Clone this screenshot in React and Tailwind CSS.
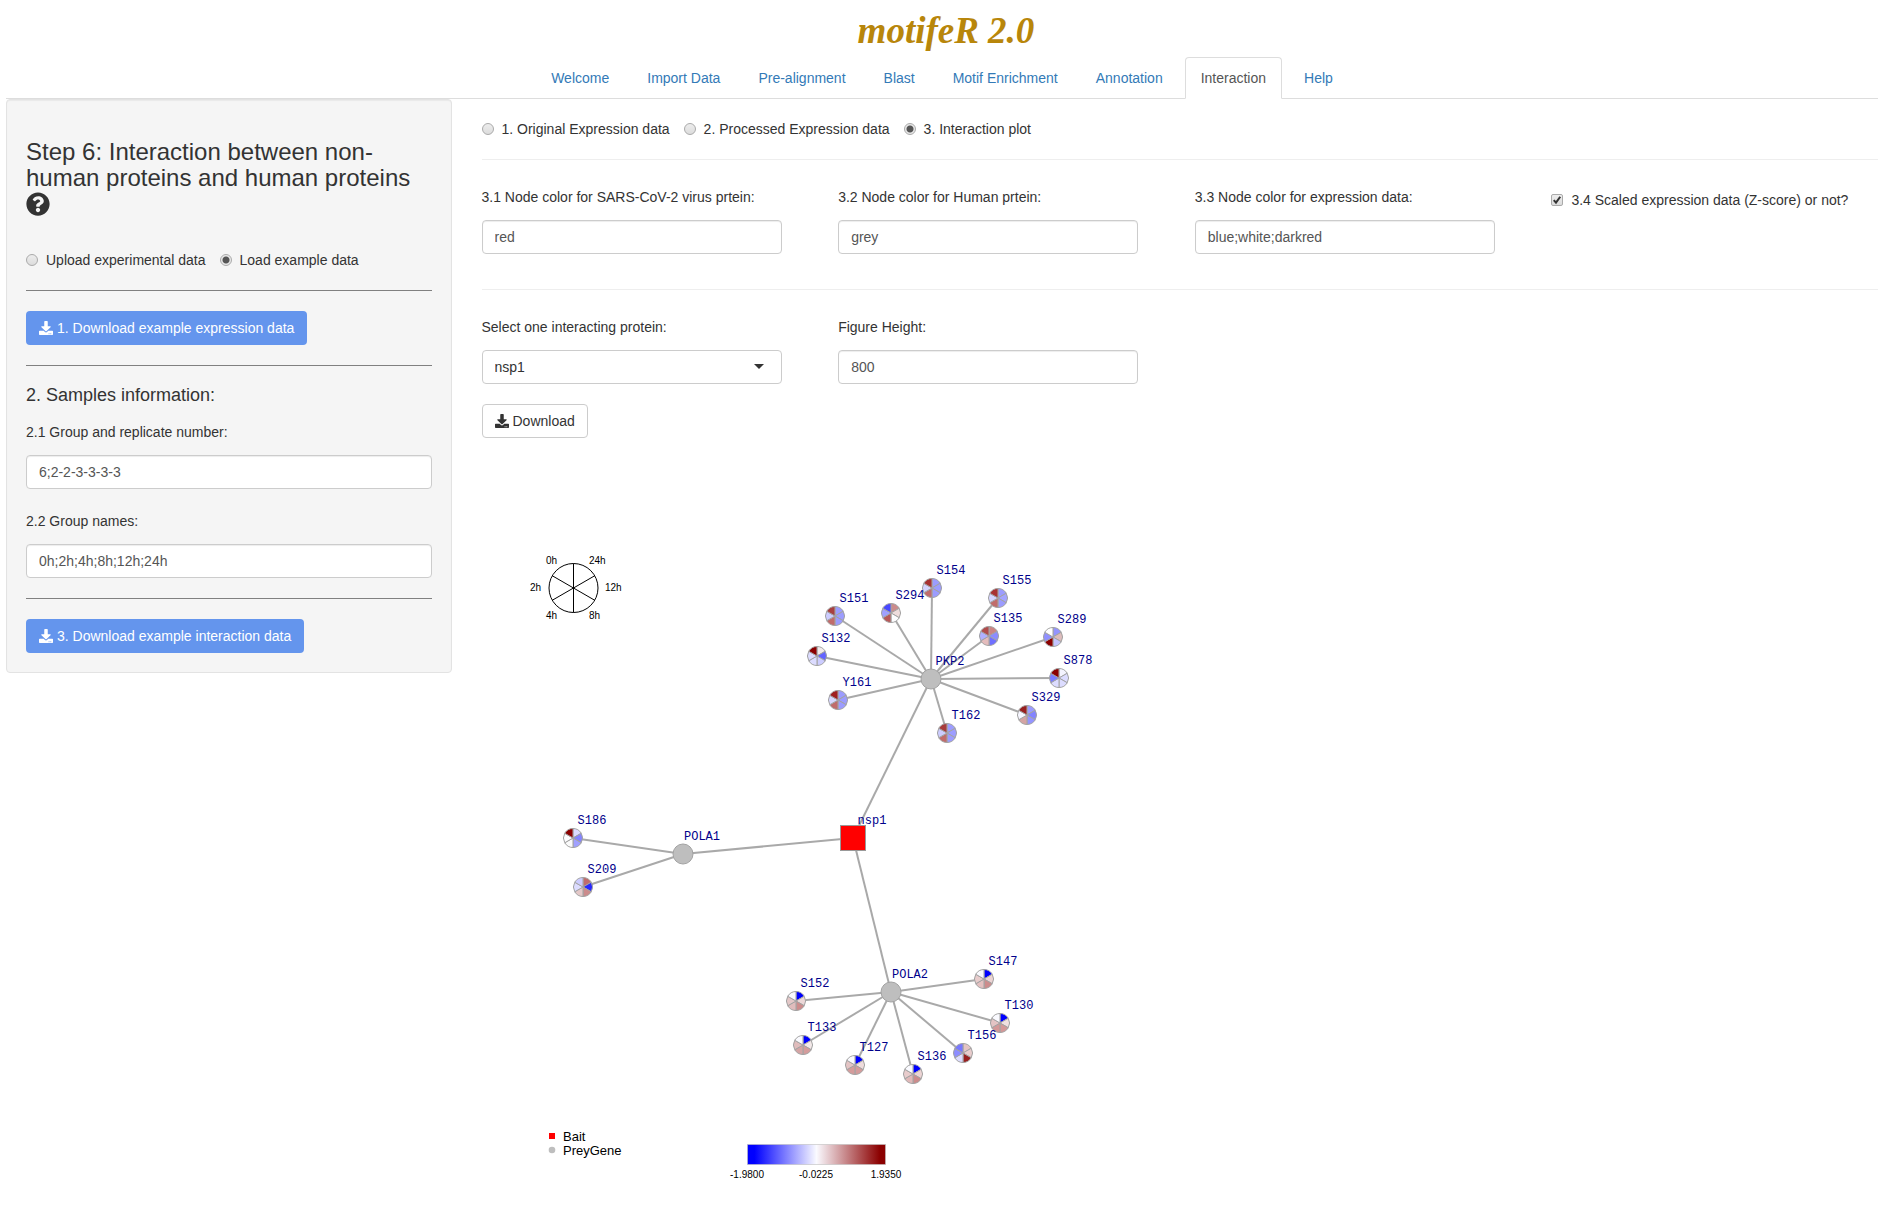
import React, { useState } from "react";
import { FaDownload, FaQuestionCircle } from "react-icons/fa";

const TABS = [
  "Welcome",
  "Import Data",
  "Pre-alignment",
  "Blast",
  "Motif Enrichment",
  "Annotation",
  "Interaction",
  "Help",
];

/* Slice colours run clockwise from the top: 24h, 12h, 8h, 4h, 2h, 0h */
const SITES = [
  { id: "S154", x: 932, y: 588, hub: "PKP2", c: ["#9c9cff", "#9c9cff", "#9c9cff", "#c06c6c", "#d4d4ff", "#a83232"] },
  { id: "S294", x: 891, y: 613, hub: "PKP2", c: ["#cc8c8c", "#eedcdc", "#fdfdff", "#b85858", "#a0a0ff", "#4848ff"] },
  { id: "S151", x: 835, y: 616, hub: "PKP2", c: ["#9c9cff", "#9c9cff", "#9c9cff", "#c06c6c", "#ccccff", "#a84040"] },
  { id: "S132", x: 817, y: 656, hub: "PKP2", c: ["#f2eaea", "#6464ff", "#ccccff", "#dcdcff", "#dcdcff", "#8b0000"] },
  { id: "Y161", x: 838, y: 700, hub: "PKP2", c: ["#9c9cff", "#9c9cff", "#9c9cff", "#c06c6c", "#d8d8ff", "#a02020"] },
  { id: "T162", x: 947, y: 733, hub: "PKP2", c: ["#9c9cff", "#9c9cff", "#9c9cff", "#c06c6c", "#ccccff", "#a83c3c"] },
  { id: "S329", x: 1027, y: 715, hub: "PKP2", c: ["#9c9cff", "#8484ff", "#9494ff", "#d4a4a4", "#f6f6ff", "#982020"] },
  { id: "S878", x: 1059, y: 678, hub: "PKP2", c: ["#f4f4ff", "#dcdcff", "#dcdcff", "#dcdcff", "#7c7cff", "#8b0000"] },
  { id: "S289", x: 1053, y: 637, hub: "PKP2", c: ["#9494ff", "#ddbcbc", "#c4c4ff", "#8b0000", "#9090ff", "#ffffff"] },
  { id: "S135", x: 989, y: 636, hub: "PKP2", c: ["#cc8484", "#8c8cff", "#7070ff", "#e4bcbc", "#b0b0ff", "#b04c4c"] },
  { id: "S155", x: 998, y: 598, hub: "PKP2", c: ["#9c9cff", "#a4a4ff", "#9c9cff", "#c06c6c", "#d4d4ff", "#a83232"] },
  { id: "S186", x: 573, y: 838, hub: "POLA1", c: ["#dcdcff", "#8484ff", "#a0a0ff", "#fafafa", "#fdfdff", "#8b0000"] },
  { id: "S209", x: 583, y: 887, hub: "POLA1", c: ["#c06c6c", "#2828ff", "#cc8c8c", "#e4c8c8", "#dcdcff", "#ccccff"] },
  { id: "S152", x: 796, y: 1001, hub: "POLA2", c: ["#0000ff", "#ecd8d8", "#cc8c8c", "#e0bcbc", "#e4c8c8", "#fafaff"] },
  { id: "T133", x: 803, y: 1045, hub: "POLA2", c: ["#0000ff", "#f2e8e8", "#d49c9c", "#d4a4a4", "#e0bcbc", "#fafaff"] },
  { id: "T127", x: 855, y: 1065, hub: "POLA2", c: ["#0000ff", "#eedcdc", "#d49c9c", "#d49c9c", "#e4c4c4", "#fafaff"] },
  { id: "S136", x: 913, y: 1074, hub: "POLA2", c: ["#0000ff", "#ecd4d4", "#cc8c8c", "#e0b8b8", "#e8cccc", "#fafaff"] },
  { id: "T156", x: 963, y: 1053, hub: "POLA2", c: ["#e4c4c4", "#e8cccc", "#982020", "#dcdcff", "#8c8cff", "#7878ff"] },
  { id: "T130", x: 1000, y: 1023, hub: "POLA2", c: ["#0000ff", "#f0e0e0", "#d49898", "#d49898", "#e4c4c4", "#fafaff"] },
  { id: "S147", x: 984, y: 979, hub: "POLA2", c: ["#0000ff", "#ecd4d4", "#cc8c8c", "#e4c0c0", "#e8cccc", "#fafaff"] },
];

const HUBS = {
  PKP2: { x: 931, y: 679 },
  POLA1: { x: 683, y: 854 },
  POLA2: { x: 891, y: 992 },
};

const BAIT = { x: 853, y: 838 };

const TIME_LABELS = [
  { t: "0h", x: 546, y: 564 },
  { t: "24h", x: 589, y: 564 },
  { t: "2h", x: 530, y: 591 },
  { t: "12h", x: 605, y: 591 },
  { t: "4h", x: 546, y: 619 },
  { t: "8h", x: 589, y: 619 },
];

function point(cx, cy, r, deg) {
  const a = (deg * Math.PI) / 180;
  return [cx + r * Math.sin(a), cy - r * Math.cos(a)];
}

function Pie({ x, y, c }) {
  return (
    <g stroke="#a3a3a3" strokeWidth="1">
      {c.map((fill, i) => {
        const [x1, y1] = point(x, y, 9.5, i * 60);
        const [x2, y2] = point(x, y, 9.5, i * 60 + 60);
        return <path key={i} fill={fill} d={`M${x} ${y}L${x1} ${y1}A9.5 9.5 0 0 1 ${x2} ${y2}Z`} />;
      })}
    </g>
  );
}

function NodeLabel({ x, y, children }) {
  return (
    <text x={x + 19} y={y - 14} textAnchor="middle" fill="#00008b" className="font-['Liberation_Mono',monospace] text-[12px]">
      {children}
    </text>
  );
}

function Network() {
  return (
    <svg viewBox="482 438 1200 776" className="block w-[1200px] max-w-full" role="img" aria-label="Interaction network of nsp1">
      <defs>
        <linearGradient id="scale">
          <stop offset="0" stopColor="#0000ff" />
          <stop offset="0.05" stopColor="#0000ff" />
          <stop offset="0.5" stopColor="#fafaff" />
          <stop offset="0.96" stopColor="#8b0000" />
          <stop offset="1" stopColor="#8b0000" />
        </linearGradient>
      </defs>

      <g stroke="#000" strokeWidth="1" fill="none">
        <circle cx="573.5" cy="588" r="24.5" />
        {[0, 60, 120].map((d) => {
          const [x1, y1] = point(573.5, 588, 24.5, d);
          const [x2, y2] = point(573.5, 588, 24.5, d + 180);
          return <line key={d} x1={x1} y1={y1} x2={x2} y2={y2} />;
        })}
      </g>
      <g fill="#000" className="text-[10px]">
        {TIME_LABELS.map((l) => (
          <text key={l.t} x={l.x} y={l.y}>{l.t}</text>
        ))}
      </g>

      <g stroke="#a9a9a9" strokeWidth="2">
        {SITES.map((s) => (
          <line key={s.id} x1={s.x} y1={s.y} x2={HUBS[s.hub].x} y2={HUBS[s.hub].y} />
        ))}
        {Object.entries(HUBS).map(([id, h]) => (
          <line key={id} x1={BAIT.x} y1={BAIT.y} x2={h.x} y2={h.y} />
        ))}
      </g>

      {SITES.map((s) => (
        <Pie key={s.id} x={s.x} y={s.y} c={s.c} />
      ))}
      {Object.entries(HUBS).map(([id, h]) => (
        <circle key={id} cx={h.x} cy={h.y} r="10" fill="#bebebe" stroke="#a3a3a3" />
      ))}
      <rect x={BAIT.x - 12.5} y={BAIT.y - 12.5} width="25" height="25" fill="#ff0000" stroke="#999" />

      {SITES.map((s) => (
        <NodeLabel key={s.id} x={s.x} y={s.y}>{s.id}</NodeLabel>
      ))}
      {Object.entries(HUBS).map(([id, h]) => (
        <NodeLabel key={id} x={h.x} y={h.y}>{id}</NodeLabel>
      ))}
      <NodeLabel x={BAIT.x} y={BAIT.y}>nsp1</NodeLabel>

      <rect x="549" y="1133" width="6" height="6" fill="#ff0000" />
      <circle cx="552" cy="1150" r="3.3" fill="#bebebe" />
      <g fill="#000" className="text-[13px]">
        <text x="563" y="1141">Bait</text>
        <text x="563" y="1155">PreyGene</text>
      </g>

      <rect x="747.5" y="1144.5" width="138" height="20" fill="url(#scale)" stroke="#bebebe" strokeOpacity="0.6" />
      <g fill="#000" textAnchor="middle" className="text-[10px]">
        <text x="747" y="1178">-1.9800</text>
        <text x="816" y="1178">-0.0225</text>
        <text x="886" y="1178">1.9350</text>
      </g>
    </svg>
  );
}

function RadioGroup({ name, options, initial }) {
  const [value, setValue] = useState(initial);
  return (
    <div className="flex flex-wrap gap-x-[14px]">
      {options.map((o) => (
        <label key={o} className="flex items-center gap-2">
          <input
            type="radio"
            name={name}
            checked={value === o}
            onChange={() => setValue(o)}
            className="size-3 appearance-none rounded-full border border-[#aaa] bg-linear-to-b from-[#ededed] to-[#dcdcdc] checked:bg-[radial-gradient(circle,#555_0_3px,#e8e8e8_4px)]"
          />
          {o}
        </label>
      ))}
    </div>
  );
}

const FIELD =
  "h-[34px] rounded-[4px] border border-[#ccc] bg-white px-3 text-[14px] leading-5 shadow-[inset_0_1px_1px_rgba(0,0,0,0.075)]";

function TextField({ id, label, value, wide }) {
  return (
    <div className="flex flex-col gap-[13px]">
      <label htmlFor={id}>{label}</label>
      <input id={id} type="text" defaultValue={value} className={`${FIELD} text-[#555] ${wide ? "w-full" : "w-[300px] max-w-full"}`} />
    </div>
  );
}

function BlueButton({ children }) {
  return (
    <button type="button" className="flex h-[34px] items-center gap-1 rounded-[4px] bg-[#6495ed] px-[13px] text-white">
      <FaDownload size={14} />
      {children}
    </button>
  );
}

function Sidebar() {
  return (
    <aside className="w-1/4 px-[15px]">
      <form className="rounded-[4px] border border-[#e3e3e3] bg-[#f5f5f5] p-[19px] shadow-[inset_0_1px_1px_rgba(0,0,0,0.05)]">
        <h3 className="mt-5 text-[24px] leading-[26px]">
          Step 6: Interaction between non-human proteins and human proteins{" "}
          <FaQuestionCircle size={24} className="inline-block align-[-4px]" />
        </h3>
        <div className="mt-[33px]">
          <RadioGroup name="source" options={["Upload experimental data", "Load example data"]} initial="Load example data" />
        </div>
        <hr className="my-5 border-[#808080]" />
        <BlueButton>1. Download example expression data</BlueButton>
        <hr className="mt-5 mb-[19px] border-[#808080]" />
        <h4 className="text-[18px] leading-5">2. Samples information:</h4>
        <div className="mt-[17px] flex flex-col gap-[22px]">
          <TextField id="groups" label="2.1 Group and replicate number:" value="6;2-2-3-3-3-3" wide />
          <TextField id="names" label="2.2 Group names:" value="0h;2h;4h;8h;12h;24h" wide />
        </div>
        <hr className="my-5 border-[#808080]" />
        <BlueButton>3. Download example interaction data</BlueButton>
      </form>
    </aside>
  );
}

export default function App() {
  return (
    <div className="overflow-hidden bg-white pr-[7px] pl-[6px] font-['Liberation_Sans',Arial,sans-serif] text-[14px] leading-5 text-[#333]">
      <header>
        <h1 className="h-[57px] pl-2 text-center font-['Liberation_Serif',serif] text-[37px] leading-[62px] font-bold text-[#b8860b] italic">
          motifeR 2.0
        </h1>
        <nav className="flex justify-center gap-[6px] border-b border-[#ddd]">
          {TABS.map((t) => (
            <a
              key={t}
              href="#"
              aria-current={t === "Interaction" ? "page" : undefined}
              className={
                t === "Interaction"
                  ? "-mb-px rounded-t-[4px] border border-[#ddd] border-b-white bg-white px-[15px] py-[10px] text-[#555]"
                  : "-mb-px border border-transparent px-[15px] py-[10px] text-[#337ab7]"
              }
            >
              {t}
            </a>
          ))}
        </nav>
      </header>

      <div className="-mx-[15px] flex items-start">
        <Sidebar />
        <main className="w-3/4 px-[15px] pt-5">
          <RadioGroup
            name="view"
            options={["1. Original Expression data", "2. Processed Expression data", "3. Interaction plot"]}
            initial="3. Interaction plot"
          />
          <hr className="mt-5 mb-[27px] border-[#eee]" />
          <div className="-mx-[15px] grid grid-cols-4 *:px-[15px]">
            <TextField id="virus" label="3.1 Node color for SARS-CoV-2 virus prtein:" value="red" />
            <TextField id="human" label="3.2 Node color for Human prtein:" value="grey" />
            <TextField id="expr" label="3.3 Node color for expression data:" value="blue;white;darkred" />
            <label className="flex items-center gap-2 self-start pt-[3px] whitespace-nowrap">
              <span className="grid size-3 place-items-center">
                <input
                  type="checkbox"
                  defaultChecked
                  className="peer col-start-1 row-start-1 size-3 appearance-none rounded-[2px] border border-[#aaa] bg-linear-to-b from-[#ededed] to-[#dcdcdc]"
                />
                <svg viewBox="0 0 13 13" className="pointer-events-none col-start-1 row-start-1 size-3 opacity-0 peer-checked:opacity-100">
                  <path d="M3 6.6L5.4 9.4L10 3" fill="none" stroke="#333" strokeWidth="2.2" />
                </svg>
              </span>
              3.4 Scaled expression data (Z-score) or not?
            </label>
          </div>
          <hr className="mt-[35px] mb-[27px] border-[#eee]" />
          <div className="-mx-[15px] grid grid-cols-4 *:px-[15px]">
            <div className="flex flex-col gap-[13px]">
              <label htmlFor="protein">Select one interacting protein:</label>
              <div className="relative w-[300px] max-w-full">
                <select id="protein" defaultValue="nsp1" className="h-[34px] w-full appearance-none rounded-[4px] border border-[#ccc] bg-white px-3 text-[14px] leading-5">
                  <option>nsp1</option>
                </select>
                <svg viewBox="0 0 10 5" className="pointer-events-none absolute top-[14px] right-[18px] h-[5px] w-[10px]">
                  <path d="M0 0H10L5 5Z" fill="#333" />
                </svg>
              </div>
            </div>
            <TextField id="height" label="Figure Height:" value="800" />
          </div>
          <button type="button" className="mt-5 flex h-[34px] items-center gap-1 rounded-[4px] border border-[#ccc] bg-white px-3">
            <FaDownload size={14} />
            Download
          </button>
          <Network />
        </main>
      </div>
    </div>
  );
}
